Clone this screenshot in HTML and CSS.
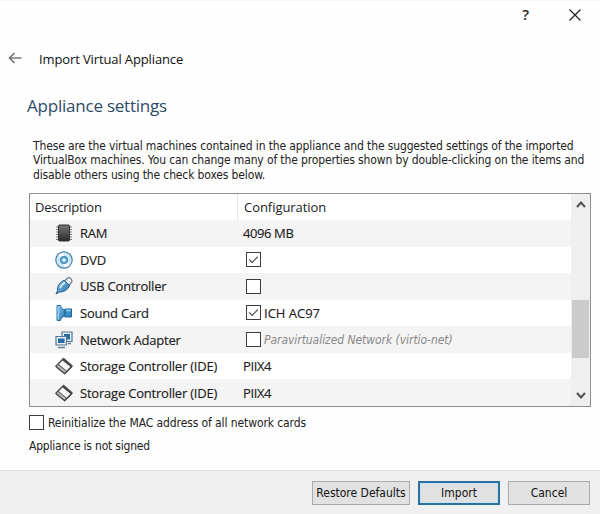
FILE: index.html
```html
<!DOCTYPE html>
<html lang="en">
<head>
<meta charset="utf-8">
<title>Import Virtual Appliance</title>
<link rel="stylesheet" href="styles.css">
</head>
<body>
<svg width="0" height="0" class="defs" aria-hidden="true">
  <defs>
    <linearGradient id="blue" x1="0" y1="0" x2="1" y2="1"><stop offset="0" stop-color="#9bd0f0"/><stop offset="1" stop-color="#1769a8"/></linearGradient>
    <linearGradient id="chip" x1="0" y1="0" x2="0" y2="1"><stop offset="0" stop-color="#777"/><stop offset="1" stop-color="#292929"/></linearGradient>
    <symbol id="storage" viewBox="0 0 18 18">
      <path d="M.8 8.800L8.500 1l8.700 7.500v1.300L9.800 17.200.8 10z" fill="#444" stroke="#444" stroke-width=".8" stroke-linejoin="round"/>
      <path d="M3.800 7.300l3.800-3.900 7.800 6.300-3.900 4z" fill="#f6f6f6"/>
      <path d="M1.600 9.200l1.500-1.500 7.900 6.500-1.500 1.600z" fill="#bcbcbc"/>
    </symbol>
    <symbol id="tick" viewBox="0 0 15 15"><path d="M2.500 7.400l3.500 3.400 6.500-6.600" fill="none" stroke="#444" stroke-width="1.300"/></symbol>
  </defs>
</svg>
<div class="window">
  <div class="titlebar">
    <span class="help">?</span>
    <svg class="close" viewBox="0 0 12 12"><path d="M.5.5l11 11M11.500.5l-11 11" stroke="#222" stroke-width="1.200"/></svg>
  </div>
  <div class="nav">
    <svg class="back" viewBox="0 0 14 12"><path d="M13.500 6H1.500M6.500 1L1.500 6l5 5" fill="none" stroke="#777" stroke-width="1.700"/></svg>
    <span class="wizard">Import Virtual Appliance</span>
  </div>
  <h1>Appliance settings</h1>
  <p class="intro">These are the virtual machines contained in the appliance and the suggested settings of the imported<br>VirtualBox machines. You can change many of the properties shown by double-clicking on the items and<br>disable others using the check boxes below.</p>
  <div class="list">
    <div class="rows">
      <div class="head"><span class="hd">Description</span><span class="hc">Configuration</span></div>
      <div class="row"><svg class="icon" viewBox="0 0 18 18"><path d="M1 3h16M1 5.500h16M1 8h16M1 10.500h16M1 13h16M1 15.500h16" stroke="#777"/><rect x="3.500" y="1" width="11" height="16" rx="1" fill="url(#chip)" stroke="#333"/></svg><span class="name">RAM</span><span class="val num">4096 MB</span></div>
      <div class="row"><svg class="icon" viewBox="0 0 18 18"><circle cx="9" cy="9" r="8.200" fill="#cfe6f3" stroke="#4685ad" stroke-width="1.200"/><path d="M9 9L3 4.500A7 7 0 0 1 9 2zM9 9l6 4.500A7 7 0 0 1 9 16z" fill="#fff"/><circle cx="9" cy="9" r="3.300" fill="#8ec5e3" stroke="#3988b8" stroke-width="1.400"/><circle cx="9" cy="9" r="1.300" fill="#fff"/></svg><span class="name">DVD</span><span class="val"><span class="box"><svg><use href="#tick"/></svg></span></span></div>
      <div class="row"><svg class="icon" viewBox="0 0 18 18"><path d="M9.500 4L13 .8c2-.5 4.200 1.500 4 3.700L14 8.500z" fill="#eef2f4" stroke="#5f7a8a" stroke-width="1.200"/><path d="M1 17l1.500-3.500C2 9 5 5 9 3.300l5.500 5.200c-1.500 4.500-6 6.500-10 6.500z" fill="url(#blue)" stroke="#255f8b"/><path d="M5 11c1-3 3-4.500 5-5.500" fill="none" stroke="#d8f1ff" stroke-width="1.500"/></svg><span class="name">USB Controller</span><span class="val"><span class="box"></span></span></div>
      <div class="row"><svg class="icon" viewBox="0 0 18 18"><path d="M2 1.500h3.500c.5 2.500 2 3.800 4.500 4.500v6c-2.500.7-4 2-4.500 4.500H2z" fill="url(#blue)" stroke="#2870a3"/><path d="M10 5h6.500v8H10z" fill="#368ec4" stroke="#2367a0"/><path d="M3.300 2.500v13M11 6.500h4.500" stroke="#9ed4f3" stroke-width="1.300"/></svg><span class="name">Sound Card</span><span class="val"><span class="box"><svg><use href="#tick"/></svg></span>ICH AC97</span></div>
      <div class="row"><svg class="icon" viewBox="0 0 18 18"><path d="M7 1h10v9.500H7z" fill="#e6eff5" stroke="#507794" stroke-width="1.200"/><path d="M9 3h6v5.500H9z" fill="#276ba4"/><path d="M1 5.500h10.500v8.500H1z" fill="#e6eff5" stroke="#507794" stroke-width="1.200"/><path d="M3 7.500h6.500V12H3z" fill="#276ba4"/><path d="M3 16.500h7M13 12.500h3" stroke="#607f96" stroke-width="1.600"/></svg><span class="name">Network Adapter</span><span class="val"><span class="box"></span><i>Paravirtualized Network (virtio-net)</i></span></div>
      <div class="row"><svg class="icon"><use href="#storage"/></svg><span class="name">Storage Controller (IDE)</span><span class="val num">PIIX4</span></div>
      <div class="row"><svg class="icon"><use href="#storage"/></svg><span class="name">Storage Controller (IDE)</span><span class="val num">PIIX4</span></div>
    </div>
    <div class="scroll">
      <svg class="arrow" viewBox="0 0 10 7"><path d="M1 6l4-4.500L9 6" fill="none" stroke="#505050" stroke-width="2"/></svg>
      <div class="thumb"></div>
      <svg class="arrow" viewBox="0 0 10 7"><path d="M1 1l4 4.500L9 1" fill="none" stroke="#505050" stroke-width="2"/></svg>
    </div>
  </div>
  <div class="mac"><span class="box"></span><span class="maclabel">Reinitialize the MAC address of all network cards</span></div>
  <div class="signed">Appliance is not signed</div>
  <div class="footer">
    <div class="btn restore">Restore Defaults</div>
    <div class="btn import">Import</div>
    <div class="btn cancel">Cancel</div>
  </div>
</div>
</body>
</html>
```
FILE: styles.css
```css
* { box-sizing: border-box; }
body { margin: 0; background: #fefefe; }
.defs { position: absolute; }
.window { width: 600px; height: 514px; display: flex; flex-direction: column; overflow: hidden; font: 12px/14px "DejaVu Sans Condensed", "DejaVu Sans", sans-serif; font-stretch: condensed; color: #222; background: #fefefe; border-top: 1px solid #faf4f6; white-space: nowrap; }
svg { display: block; flex: none; }
.titlebar { height: 42px; padding: 8px 19px 0 0; display: flex; justify-content: flex-end; gap: 40px; }
.help { font: 600 15px/10px "Open Sans", sans-serif; }
.close { width: 12px; height: 12px; }
.nav { height: 32px; display: flex; align-items: center; padding-left: 8px; }
.back { width: 14px; height: 12px; margin-top: -3px; }
.wizard { margin-left: 17px; font: 13px/18px "Open Sans", sans-serif; letter-spacing: -.12px; color: #111; }
h1 { margin: 19px 0 0 27px; font: 17px/24px "Open Sans", sans-serif; letter-spacing: -.22px; color: #2e4b68; }
.intro { margin: 21px 0 0 33px; height: 54px; line-height: 14.4px; letter-spacing: -.13px; }
.list { margin-left: 29px; width: 562px; height: 214px; border: 1px solid #8b908e; display: flex; flex: none; background: #fff; font: 13px/18px "Open Sans", sans-serif; color: #1c1c1c; }
.rows { width: 541px; }
.head { height: 26px; display: flex; align-items: center; }
.hd { width: 208px; height: 26px; line-height: 27px; padding-left: 5px; border-right: 1px solid #e8e8e8; letter-spacing: -.25px; }
.hc { padding-left: 6px; letter-spacing: -.05px; }
.row { height: 26.571px; display: flex; align-items: center; padding-left: 25px; -webkit-text-stroke: .15px; }
.row:nth-child(even) { background: #f4f4f4; }
.icon { width: 18px; height: 18px; }
.name { width: 170px; padding-left: 7px; letter-spacing: -.21px; }
.val { display: flex; align-items: center; }
.num { letter-spacing: -.4px; }
.box { width: 15px; height: 15px; flex: none; border: 1px solid #3c3c3c; background: #fff; }
.val .box { margin-left: 3px; margin-right: 3px; }
.box svg { width: 13px; height: 13px; }
.val i { color: #888; font: italic 12px/18px "DejaVu Sans Condensed", sans-serif; font-stretch: condensed; letter-spacing: -.05px; -webkit-text-stroke: 0; }
.scroll { width: 19px; background: #efefef; display: flex; flex-direction: column; align-items: center; padding: 7px 0; }
.arrow { width: 10px; height: 7px; }
.thumb { width: 17px; height: 58px; margin: 92px 0 34px; background: #cbcbcb; }
.mac { margin: 8px 0 0 29px; height: 15px; display: flex; align-items: center; letter-spacing: -.1px; }
.maclabel { margin-left: 4px; }
.signed { margin: 9px 0 0 29px; letter-spacing: -.2px; }
.footer { margin-top: auto; height: 44px; flex: none; background: #f0f0f0; border-top: 1px solid #dedede; display: flex; padding: 10px 0 0 312px; }
.btn { height: 24px; border: 1px solid #aaa; background: #e1e1e1; display: flex; align-items: center; justify-content: center; color: #111; }
.restore { width: 98px; }
.import { width: 82px; margin-left: 8px; border: 2px solid #2a719d; background: #e1e1e1; box-shadow: inset 0 0 2px 1px #c4e2f4; }
.cancel { width: 82px; margin-left: 8px; }
```
